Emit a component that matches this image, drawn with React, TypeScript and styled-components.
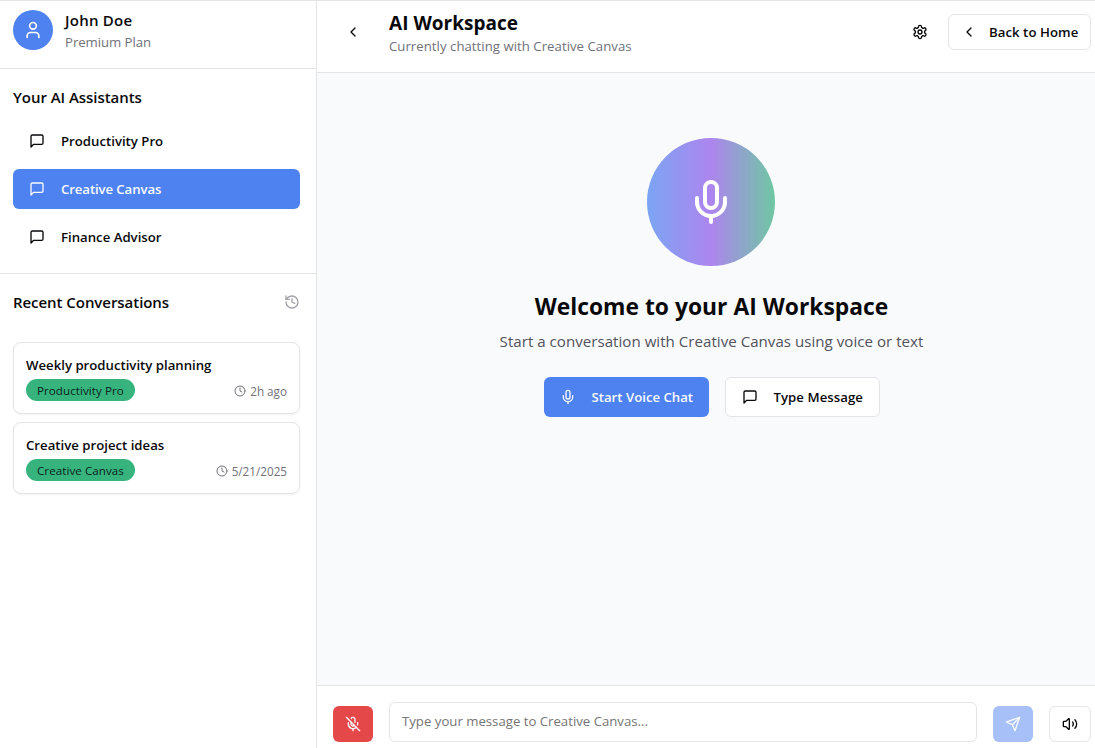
import React from "react";
import styled, { createGlobalStyle } from "styled-components";

const Global = createGlobalStyle`
  *, *::before, *::after { box-sizing: border-box; }
  body { margin: 0; background: #fff; color: #09090b; font-family: "Segoe UI", "Open Sans", sans-serif; }
  h1, h2, h3, p { margin: 0; }
  button, input { font-family: inherit; }
`;

const line = "#e4e4e7";
const blue = "#4f82f1";

/* ---------- icons ---------- */

const Svg = styled.svg<{ $size: number }>`
  width: ${(p) => p.$size}px;
  height: ${(p) => p.$size}px;
  flex: none;
  fill: none;
  stroke: currentColor;
  stroke-width: 2;
  stroke-linecap: round;
  stroke-linejoin: round;
`;

const glyphs = {
  user: (
    <>
      <path d="M19 21v-2a4 4 0 0 0-4-4H9a4 4 0 0 0-4 4v2" />
      <circle cx="12" cy="7" r="4" />
    </>
  ),
  message: <path d="M21 15a2 2 0 0 1-2 2H7l-4 4V5a2 2 0 0 1 2-2h14a2 2 0 0 1 2 2z" />,
  history: (
    <>
      <path d="M3 12a9 9 0 1 0 9-9 9.75 9.75 0 0 0-6.74 2.74L3 8" />
      <path d="M3 3v5h5" />
      <path d="M12 7v5l4 2" />
    </>
  ),
  clock: (
    <>
      <circle cx="12" cy="12" r="10" />
      <path d="M12 6v6l4 2" />
    </>
  ),
  chevron: <path d="m15 18-6-6 6-6" />,
  settings: (
    <>
      <path d="M12.22 2h-.44a2 2 0 0 0-2 2v.18a2 2 0 0 1-1 1.73l-.43.25a2 2 0 0 1-2 0l-.15-.08a2 2 0 0 0-2.73.73l-.22.38a2 2 0 0 0 .73 2.73l.15.1a2 2 0 0 1 1 1.72v.51a2 2 0 0 1-1 1.74l-.15.09a2 2 0 0 0-.73 2.73l.22.38a2 2 0 0 0 2.73.73l.15-.08a2 2 0 0 1 2 0l.43.25a2 2 0 0 1 1 1.73V20a2 2 0 0 0 2 2h.44a2 2 0 0 0 2-2v-.18a2 2 0 0 1 1-1.73l.43-.25a2 2 0 0 1 2 0l.15.08a2 2 0 0 0 2.73-.73l.22-.39a2 2 0 0 0-.73-2.73l-.15-.08a2 2 0 0 1-1-1.74v-.5a2 2 0 0 1 1-1.74l.15-.09a2 2 0 0 0 .73-2.73l-.22-.38a2 2 0 0 0-2.73-.73l-.15.08a2 2 0 0 1-2 0l-.43-.25a2 2 0 0 1-1-1.73V4a2 2 0 0 0-2-2z" />
      <circle cx="12" cy="12" r="3" />
    </>
  ),
  mic: (
    <>
      <path d="M12 2a3 3 0 0 0-3 3v7a3 3 0 0 0 6 0V5a3 3 0 0 0-3-3Z" />
      <path d="M19 10v2a7 7 0 0 1-14 0v-2" />
      <path d="M12 19v3" />
    </>
  ),
  micOff: (
    <>
      <path d="m2 2 20 20" />
      <path d="M18.89 13.23A7.12 7.12 0 0 0 19 12v-2" />
      <path d="M5 10v2a7 7 0 0 0 12 5" />
      <path d="M15 9.34V5a3 3 0 0 0-5.68-1.33" />
      <path d="M9 9v3a3 3 0 0 0 5.12 2.12" />
      <path d="M12 19v3" />
    </>
  ),
  send: (
    <>
      <path d="m22 2-7 20-4-9-9-4Z" />
      <path d="M22 2 11 13" />
    </>
  ),
  volume: (
    <>
      <path d="M11 4.702a.705.705 0 0 0-1.203-.498L6.413 7.587A1.4 1.4 0 0 1 5.416 8H3a1 1 0 0 0-1 1v6a1 1 0 0 0 1 1h2.416a1.4 1.4 0 0 1 .997.413l3.383 3.384A.705.705 0 0 0 11 19.298z" />
      <path d="M16 9a5 5 0 0 1 0 6" />
      <path d="M19.364 18.364a9 9 0 0 0 0-12.728" />
    </>
  ),
};

const Icon = ({ name, size = 16 }: { name: keyof typeof glyphs; size?: number }) => (
  <Svg viewBox="0 0 24 24" $size={size} aria-hidden="true">
    {glyphs[name]}
  </Svg>
);

/* ---------- frame ---------- */

const Shell = styled.div`
  display: grid;
  grid-template-columns: 317px 1fr;
  width: 100%;
  height: 748px;
  border-top: 1px solid ${line};
  overflow: hidden;
`;

const Sidebar = styled.aside`
  display: flex;
  flex-direction: column;
  border-right: 1px solid ${line};
`;

const Main = styled.main`
  display: flex;
  flex-direction: column;
  min-width: 0;
`;

/* ---------- sidebar ---------- */

const Profile = styled.section`
  display: flex;
  gap: 12px;
  height: 68px;
  padding: 9px 13px 0;
  border-bottom: 1px solid ${line};
`;

const Avatar = styled.div`
  display: grid;
  place-items: center;
  width: 40px;
  height: 40px;
  border-radius: 50%;
  background: ${blue};
  color: #fff;
`;

const UserName = styled.h3`
  font-size: 15px;
  font-weight: 600;
  line-height: 20px;
  letter-spacing: 0.25px;
`;

const Plan = styled.p`
  margin-top: 2px;
  font-size: 13.2px;
  line-height: 20px;
  letter-spacing: -0.05px;
  color: #71717a;
`;

const Assistants = styled.section`
  height: 205px;
  padding: 16px 16px 0 13px;
  border-bottom: 1px solid ${line};
`;

const SectionTitle = styled.h2`
  font-size: 15px;
  font-weight: 600;
  line-height: 24px;
  letter-spacing: -0.05px;
`;

const AssistantList = styled.div`
  display: flex;
  flex-direction: column;
  gap: 8px;
  margin-top: 12px;
`;

const AssistantButton = styled.button<{ $active?: boolean }>`
  display: flex;
  align-items: center;
  gap: 16px;
  height: 40px;
  padding: 0 16px;
  border: 0;
  border-radius: 6px;
  background: ${(p) => (p.$active ? blue : "transparent")};
  color: ${(p) => (p.$active ? "#f8fafc" : "#09090b")};
  font-size: 13.2px;
  font-weight: 600;
  letter-spacing: ${(p) => (p.$active ? -0.1 : 0)}px;
`;

const RecentHead = styled.div`
  display: flex;
  align-items: center;
  justify-content: space-between;
  padding: 16px 16px 0 13px;
  color: #a1a1aa;

  ${SectionTitle} { color: #09090b; }
`;

const RecentList = styled.div`
  display: flex;
  flex-direction: column;
  gap: 8px;
  padding: 28px 16px 0 13px;
`;

const Conversation = styled.article`
  height: 72px;
  padding: 12px 12px 0;
  border: 1px solid ${line};
  border-radius: 8px;
  box-shadow: 0 1px 2px rgba(0, 0, 0, 0.05);
`;

const ConversationTitle = styled.h3`
  font-size: 13.2px;
  font-weight: 600;
  line-height: 20px;
  letter-spacing: 0;
`;

const ConversationMeta = styled.div`
  display: flex;
  align-items: center;
  justify-content: space-between;
  margin-top: 4px;
`;

const Badge = styled.span`
  height: 22px;
  padding: 0 11px;
  border-radius: 11px;
  background: #37b47e;
  color: #09231a;
  font-size: 11.6px;
  font-weight: 500;
  line-height: 23px;
  letter-spacing: 0.06px;
`;

const When = styled.span`
  display: flex;
  align-items: center;
  gap: 4px;
  margin-top: 1px;
  color: #71717a;
  font-size: 11.7px;
  line-height: 16px;
`;

/* ---------- header ---------- */

const Header = styled.header`
  display: flex;
  align-items: center;
  height: 72px;
  padding: 0 4px 9px 16px;
  border-bottom: 1px solid ${line};
`;

const IconButton = styled.button`
  display: grid;
  place-items: center;
  width: 40px;
  height: 36px;
  padding: 0;
  border: 0;
  background: none;
  color: #09090b;
`;

const Heading = styled.div`
  flex: 1;
  margin-left: 16px;
  padding-top: 2px;
`;

const Title = styled.h1`
  font-size: 19px;
  font-weight: 700;
  line-height: 26px;
  letter-spacing: 0.02px;
`;

const Subtitle = styled.p`
  font-size: 13.2px;
  line-height: 20px;
  letter-spacing: 0.03px;
  color: #71717a;
`;

const HeaderActions = styled.div`
  display: flex;
  gap: 8px;
`;

const OutlineButton = styled.button<{ $large?: boolean }>`
  display: flex;
  align-items: center;
  gap: ${(p) => (p.$large ? 16 : 12)}px;
  width: ${(p) => (p.$large ? 155 : 143)}px;
  height: ${(p) => (p.$large ? 40 : 36)}px;
  padding: 0 ${(p) => (p.$large ? 16 : 12)}px;
  border: 1px solid ${line};
  border-radius: 6px;
  background: #fff;
  color: #09090b;
  font-size: 13.2px;
  font-weight: 600;
  letter-spacing: 0.05px;
  white-space: nowrap;
`;

/* ---------- welcome ---------- */

const Stage = styled.section`
  display: flex;
  flex: 1;
  flex-direction: column;
  align-items: center;
  padding: 64.5px 0 0 11px;
  background: #f9fafc;
`;

const Orb = styled.div`
  display: grid;
  place-items: center;
  width: 128px;
  height: 128px;
  margin-right: 1px;
  border-radius: 50%;
  background: linear-gradient(90deg, #7ba5f4 0%, #ad85ee 50%, #6fc7a3 100%);
  color: #fff;
`;

const Welcome = styled.h2`
  margin-top: 25.5px;
  font-size: 22.8px;
  font-weight: 700;
  line-height: 32px;
  letter-spacing: 0.03px;
`;

const Hint = styled.p`
  margin-top: 6px;
  font-size: 15.1px;
  line-height: 24px;
  letter-spacing: 0.02px;
  color: #52525b;
`;

const Actions = styled.div`
  display: flex;
  gap: 16px;
  margin-top: 24px;
`;

const PrimaryButton = styled.button`
  display: flex;
  align-items: center;
  gap: 16px;
  width: 165px;
  height: 40px;
  padding: 0 16px;
  border: 0;
  border-radius: 6px;
  background: ${blue};
  color: #f8fafc;
  font-size: 13.2px;
  font-weight: 600;
  white-space: nowrap;
`;

/* ---------- composer ---------- */

const Composer = styled.footer`
  display: flex;
  align-items: flex-start;
  gap: 16px;
  height: 63px;
  padding: 16px 4px 0 16px;
  border-top: 1px solid ${line};
`;

const MessageInput = styled.input`
  flex: 1;
  min-width: 0;
  height: 40px;
  padding: 0 12px 2px;
  border: 1px solid ${line};
  border-radius: 6px;
  outline: none;
  background: #fff;
  font-size: 13.2px;

  &::placeholder { color: #757575; opacity: 1; }
`;

const ToolButton = styled.button<{ $bg?: string; $fg?: string; $w?: number }>`
  display: grid;
  place-items: center;
  width: ${(p) => p.$w ?? 40}px;
  height: 36px;
  margin-top: 4px;
  padding: 0;
  border: ${(p) => (p.$bg ? "0" : `1px solid ${line}`)};
  border-radius: 6px;
  background: ${(p) => p.$bg ?? "#fff"};
  color: ${(p) => p.$fg ?? "#09090b"};
`;

const assistants = ["Productivity Pro", "Creative Canvas", "Finance Advisor"];
const conversations = [
  { title: "Weekly productivity planning", assistant: "Productivity Pro", when: "2h ago" },
  { title: "Creative project ideas", assistant: "Creative Canvas", when: "5/21/2025" },
];

export default function App() {
  const active = "Creative Canvas";
  return (
    <>
      <Global />
      <Shell>
        <Sidebar>
          <Profile>
            <Avatar>
              <Icon name="user" size={20} />
            </Avatar>
            <div>
              <UserName>John Doe</UserName>
              <Plan>Premium Plan</Plan>
            </div>
          </Profile>
          <Assistants>
            <SectionTitle>Your AI Assistants</SectionTitle>
            <AssistantList>
              {assistants.map((name) => (
                <AssistantButton key={name} $active={name === active}>
                  <Icon name="message" />
                  {name}
                </AssistantButton>
              ))}
            </AssistantList>
          </Assistants>
          <RecentHead>
            <SectionTitle>Recent Conversations</SectionTitle>
            <Icon name="history" />
          </RecentHead>
          <RecentList>
            {conversations.map((c) => (
              <Conversation key={c.title}>
                <ConversationTitle>{c.title}</ConversationTitle>
                <ConversationMeta>
                  <Badge>{c.assistant}</Badge>
                  <When>
                    <Icon name="clock" size={12} />
                    {c.when}
                  </When>
                </ConversationMeta>
              </Conversation>
            ))}
          </RecentList>
        </Sidebar>
        <Main>
          <Header>
            <IconButton aria-label="Back">
              <Icon name="chevron" />
            </IconButton>
            <Heading>
              <Title>AI Workspace</Title>
              <Subtitle>Currently chatting with {active}</Subtitle>
            </Heading>
            <HeaderActions>
              <IconButton aria-label="Settings">
                <Icon name="settings" />
              </IconButton>
              <OutlineButton>
                <Icon name="chevron" />
                Back to Home
              </OutlineButton>
            </HeaderActions>
          </Header>
          <Stage>
            <Orb>
              <Icon name="mic" size={48} />
            </Orb>
            <Welcome>Welcome to your AI Workspace</Welcome>
            <Hint>Start a conversation with {active} using voice or text</Hint>
            <Actions>
              <PrimaryButton>
                <Icon name="mic" />
                Start Voice Chat
              </PrimaryButton>
              <OutlineButton $large>
                <Icon name="message" />
                Type Message
              </OutlineButton>
            </Actions>
          </Stage>
          <Composer>
            <ToolButton $bg="#e54848" $fg="#f8fafc" aria-label="Mute">
              <Icon name="micOff" />
            </ToolButton>
            <MessageInput placeholder={`Type your message to ${active}...`} />
            <ToolButton $bg="#a7c0f8" $fg="#f8fafc" aria-label="Send">
              <Icon name="send" />
            </ToolButton>
            <ToolButton $w={42} aria-label="Volume">
              <Icon name="volume" />
            </ToolButton>
          </Composer>
        </Main>
      </Shell>
    </>
  );
}
